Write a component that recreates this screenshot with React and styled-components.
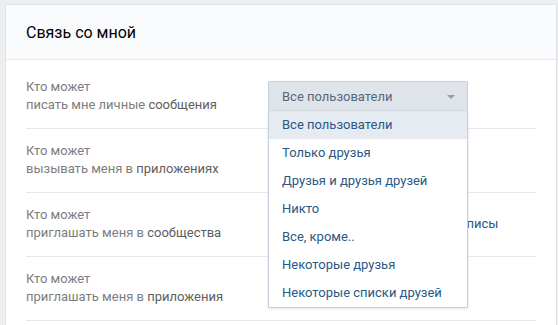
import React from 'react'
import styled, { createGlobalStyle } from 'styled-components'

const GlobalStyle = createGlobalStyle`
  html, body {
    margin: 0;
    background: #edeef0;
  }
  body {
    padding: 4px 1px 0 5px;
    font-family: Roboto, "Open Sans", "Liberation Sans", sans-serif;
    -webkit-font-smoothing: antialiased;
  }
`

const rows = [
  { first: 'Кто может', rest: 'писать мне личные', last: 'сообщения', value: 'Все пользователи', select: true },
  { first: 'Кто может', rest: 'вызывать меня в', last: 'приложениях' },
  { first: 'Кто может', rest: 'приглашать меня в', last: 'сообщества', value: 'Друзья, друзья друзей или подписы' },
  { first: 'Кто может', rest: 'приглашать меня в', last: 'приложения' },
]

const options = [
  'Все пользователи',
  'Только друзья',
  'Друзья и друзья друзей',
  'Никто',
  'Все, кроме..',
  'Некоторые друзья',
  'Некоторые списки друзей',
]

export default function App() {
  return (
    <>
      <GlobalStyle />
      <Card>
        <Header>Связь со мной</Header>
        <Body>
          {rows.map((r, i) => (
            <Row key={`row-${i}`}>
              <Label>
                {r.first}
                <br />
                {r.rest} <Strong>{r.last}</Strong>
              </Label>
              <ValueCell>
                {r.select
                  ? <Dropdown value={r.value} />
                  : r.value ? <ValueLink>{r.value}</ValueLink> : null}
              </ValueCell>
            </Row>
          ))}
        </Body>
      </Card>
    </>
  )
}

const Dropdown = ({ value }) => (
  <SelectWrap>
    <SelectHead>
      <span>{value}</span>
      <Arrow />
    </SelectHead>
    <Menu>
      {options.map((o, i) => (
        <Option key={`opt-${i}`} $active={o === value}>{o}</Option>
      ))}
    </Menu>
  </SelectWrap>
)

const Card = styled.div`
  background: #fff;
  border: 1px solid #e1e3e6;
  border-bottom: none;
  height: 330px;
  overflow: hidden;
`

const Header = styled.div`
  height: 55px;
  box-sizing: border-box;
  padding: 1px 0 0 20px;
  background: #fafbfc;
  border-bottom: 1px solid #e7e8ec;
  display: flex;
  align-items: center;
  font-size: 16px;
  color: #000;
`

const Body = styled.div`
  padding: 5px 20px 0;
`

const Row = styled.div`
  display: flex;
  padding: 13px 0 14px;
  border-bottom: 1px solid #e7e8ec;
`

const Label = styled.div`
  width: 242px;
  flex-shrink: 0;
  font-size: 13px;
  line-height: 18px;
  color: #7d7d7d;
`

const Strong = styled.span`
  color: #5e5e5e;
`

const ValueCell = styled.div`
  flex: 1;
  padding-top: 3px;
  min-width: 0;
`

const ValueLink = styled.span`
  display: block;
  padding: 6px 0 0 10px;
  font-size: 13px;
  line-height: 18px;
  color: #2a5885;
  white-space: nowrap;
`

const SelectWrap = styled.div`
  position: relative;
  width: 200px;
  height: 30px;
  z-index: 5;
`

const SelectHead = styled.div`
  height: 30px;
  box-sizing: border-box;
  border: 1px solid #c5d0db;
  border-bottom-color: #d3dbe3;
  border-radius: 2px 2px 0 0;
  background: #dfe4ea;
  display: flex;
  align-items: center;
  justify-content: space-between;
  padding: 0 12px 0 13px;
  font-size: 13px;
  color: #55677d;
`

const Arrow = styled.i`
  width: 0;
  height: 0;
  border-left: 4px solid transparent;
  border-right: 4px solid transparent;
  border-top: 4px solid #939fad;
  margin-top: 1px;
`

const Menu = styled.div`
  position: absolute;
  top: 30px;
  left: 0;
  width: 200px;
  box-sizing: border-box;
  background: #fff;
  border: 1px solid #c5d0db;
  border-top: none;
  box-shadow: 0 1px 3px rgba(0, 0, 0, 0.1);
`

const Option = styled.div`
  height: 28px;
  line-height: 28px;
  padding-left: 13px;
  font-size: 13px;
  color: #2a5885;
  background: ${p => (p.$active ? '#e5ebf1' : '#fff')};
  white-space: nowrap;
`
